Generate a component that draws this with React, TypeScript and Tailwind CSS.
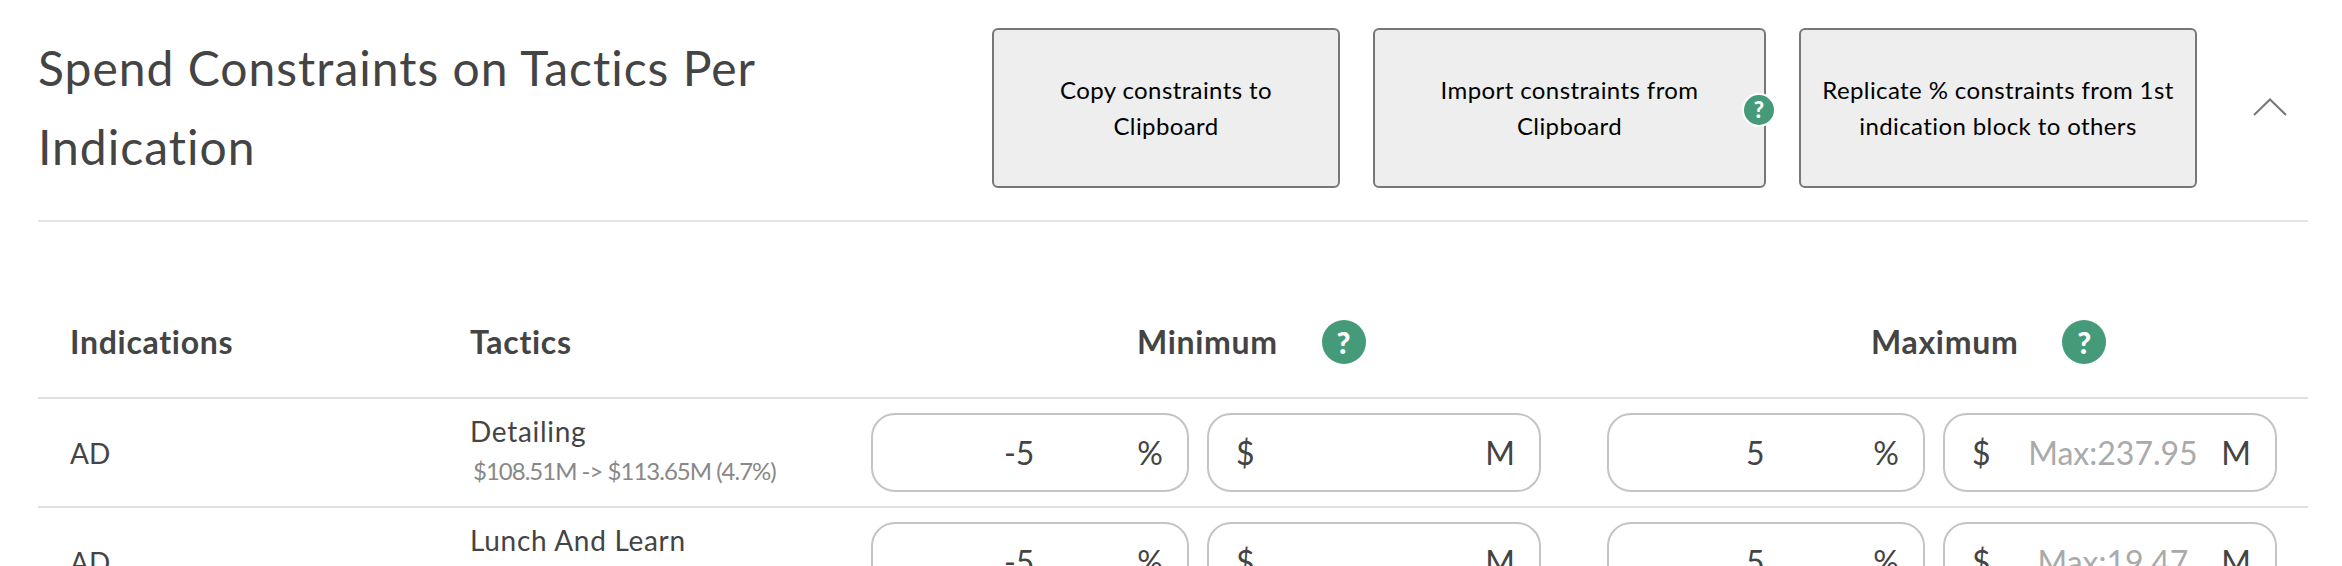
const rows = [
  { indication: 'AD', tactic: 'Detailing', spend: '$108.51M -> $113.65M (4.7%)', min: '-5', max: '5', maxHint: 'Max:237.95' },
  { indication: 'AD', tactic: 'Lunch And Learn', spend: '', min: '-5', max: '5', maxHint: 'Max:19.47' },
];

function Help({ small = false }: { small?: boolean }) {
  return (
    <span
      className={
        small
          ? 'flex h-[34px] w-[34px] items-center justify-center rounded-full border-2 border-white bg-[#459a79] text-[22px] leading-none font-black text-white'
          : 'flex h-[44px] w-[44px] items-center justify-center rounded-full bg-[#459a79] text-[30px] leading-none font-black text-white'
      }
    >
      ?
    </span>
  );
}

function ActionButton({ width, children }: { width: string; children: React.ReactNode }) {
  return (
    <button className={`${width} relative h-[160px] shrink-0 rounded-[6px] border-2 border-[#777] bg-[#eee] px-[12px] text-center text-[24px] leading-[36px] tracking-[0.4px] text-black`}>
      {children}
    </button>
  );
}

function PercentField({ value }: { value: string }) {
  return (
    <div className="flex h-[79px] w-[318px] items-center rounded-[24px] border-2 border-[#c4c4c4] pr-[24px] text-[32px] text-[#444]">
      <input readOnly value={value} className="w-0 flex-1 bg-transparent pl-[28px] text-center outline-none" />
      <span>%</span>
    </div>
  );
}

function DollarField({ hint }: { hint?: string }) {
  return (
    <div className="flex h-[79px] w-[334px] items-center rounded-[24px] border-2 border-[#c4c4c4] pr-[24px] pl-[27px] text-[32px] text-[#444]">
      <span>$</span>
      <input readOnly placeholder={hint} className="w-0 flex-1 bg-transparent pl-[14px] text-center outline-none placeholder:text-[#aaa]" />
      <span>M</span>
    </div>
  );
}

export default function App() {
  return (
    <div className="h-[566px] w-[2342px] overflow-hidden bg-white pr-[34px] pl-[38px] font-['Lato',sans-serif] text-[#444]">
      <div className="flex h-[222px] items-start border-b-2 border-[#e5e5e5] pt-[28px]">
        <h2 className="w-[954px] shrink-0 pr-[180px] text-[48px] leading-[79px] font-normal tracking-[1px]">
          Spend Constraints on Tactics Per Indication
        </h2>
        <div className="flex gap-[33px]">
          <ActionButton width="w-[348px]">Copy constraints to<br />Clipboard</ActionButton>
          <ActionButton width="w-[393px]">
            Import constraints from<br />Clipboard
            <span className="absolute top-[63px] -right-[12px]"><Help small /></span>
          </ActionButton>
          <ActionButton width="w-[398px]">Replicate % constraints from 1st<br />indication block to others</ActionButton>
        </div>
        <svg className="mt-[70px] ml-[56px]" width="34" height="18" viewBox="0 0 34 18" fill="none" stroke="#777" strokeWidth="2">
          <path d="M1 17 17 1.500 33 17" />
        </svg>
      </div>

      <div className="flex h-[177px] items-center border-b-2 border-[#e0e0e0] pt-[64px] text-[32px] font-bold tracking-[0.7px]">
        <div className="w-[432px] pl-[32px]">Indications</div>
        <div className="w-[401px]">Tactics</div>
        <div className="flex w-[736px] items-center gap-[44px] pl-[266px]">Minimum <Help /></div>
        <div className="flex items-center gap-[44px] pl-[264px]">Maximum <Help /></div>
      </div>

      {rows.map((row) => (
        <div key={row.tactic} className="flex h-[109px] items-center border-b-2 border-[#e0e0e0]">
          <div className="w-[432px] pl-[32px] text-[28px]">{row.indication}</div>
          <div className="w-[401px] pb-[4px]">
            <div className="text-[28px] leading-[41px] tracking-[0.7px]">{row.tactic}</div>
            <div className="min-h-[38px] pl-[3px] text-[24px] leading-[38px] tracking-[-1px] text-[#888]">{row.spend}</div>
          </div>
          <div className="flex w-[736px] gap-[18px]">
            <PercentField value={row.min} />
            <DollarField />
          </div>
          <div className="flex gap-[18px]">
            <PercentField value={row.max} />
            <DollarField hint={row.maxHint} />
          </div>
        </div>
      ))}
    </div>
  );
}
